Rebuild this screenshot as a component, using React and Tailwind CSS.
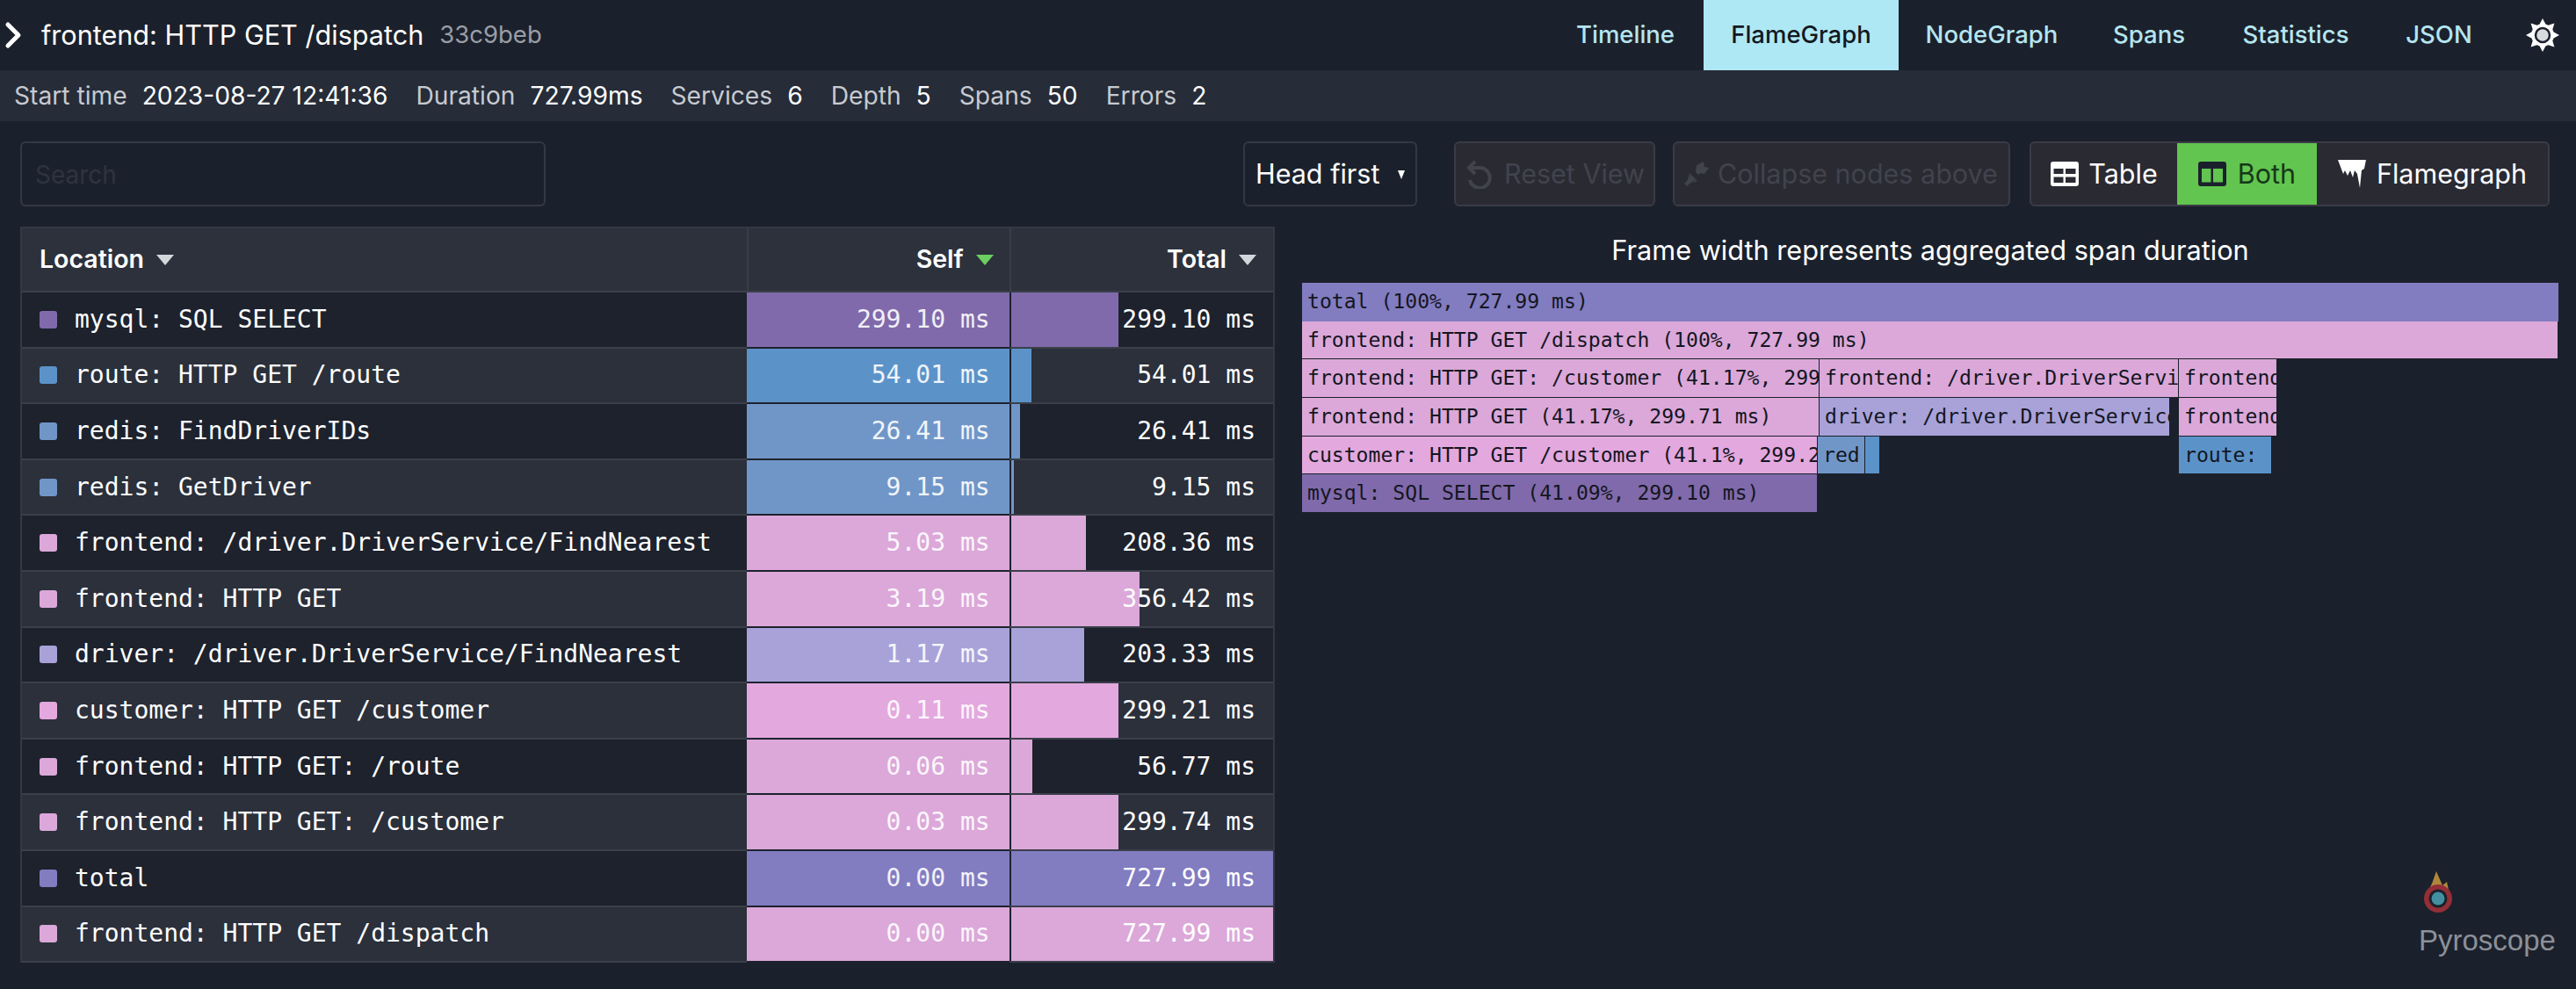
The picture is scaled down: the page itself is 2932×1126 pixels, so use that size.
import { ChevronRight } from "lucide-react";

const rows = [
  { name: "mysql: SQL SELECT", self: "299.10 ms", total: "299.10 ms", selfBar: "bg-[#806aab]", pct: 41.09 },
  { name: "route: HTTP GET /route", self: "54.01 ms", total: "54.01 ms", selfBar: "bg-[#5b93c9]", pct: 7.8 },
  { name: "redis: FindDriverIDs", self: "26.41 ms", total: "26.41 ms", selfBar: "bg-[#7096c8]", pct: 3.63 },
  { name: "redis: GetDriver", self: "9.15 ms", total: "9.15 ms", selfBar: "bg-[#7096c8]", pct: 1.26 },
  { name: "frontend: /driver.DriverService/FindNearest", self: "5.03 ms", total: "208.36 ms", selfBar: "bg-[#dba8d9]", pct: 28.6 },
  { name: "frontend: HTTP GET", self: "3.19 ms", total: "356.42 ms", selfBar: "bg-[#dba8d9]", pct: 48.96 },
  { name: "driver: /driver.DriverService/FindNearest", self: "1.17 ms", total: "203.33 ms", selfBar: "bg-[#a8a2d9]", pct: 27.93 },
  { name: "customer: HTTP GET /customer", self: "0.11 ms", total: "299.21 ms", selfBar: "bg-[#e3a8de]", pct: 41.1 },
  { name: "frontend: HTTP GET: /route", self: "0.06 ms", total: "56.77 ms", selfBar: "bg-[#dba8d9]", pct: 8.3 },
  { name: "frontend: HTTP GET: /customer", self: "0.03 ms", total: "299.74 ms", selfBar: "bg-[#dba8d9]", pct: 41.17 },
  { name: "total", self: "0.00 ms", total: "727.99 ms", selfBar: "bg-[#827cc1]", pct: 100 },
  { name: "frontend: HTTP GET /dispatch", self: "0.00 ms", total: "727.99 ms", selfBar: "bg-[#dba8d9]", pct: 100 },
];

const flameRows = [
  [{ w: 1430, c: "bg-[#827cc1]", t: "total (100%, 727.99 ms)" }],
  [{ w: 1430, c: "bg-[#dba8d9]", t: "frontend: HTTP GET /dispatch (100%, 727.99 ms)" }],
  [
    { w: 589, c: "bg-[#dba8d9]", t: "frontend: HTTP GET: /customer (41.17%, 299" },
    { w: 409, c: "bg-[#dba8d9]", t: "frontend: /driver.DriverServi" },
    { w: 112, c: "bg-[#dba8d9]", t: "frontend" },
  ],
  [
    { w: 589, c: "bg-[#dba8d9]", t: "frontend: HTTP GET (41.17%, 299.71 ms)" },
    { w: 399, c: "bg-[#a8a2d9]", t: "driver: /driver.DriverService" },
    { w: 10, c: "" },
    { w: 112, c: "bg-[#dba8d9]", t: "frontend" },
  ],
  [
    { w: 587, c: "bg-[#e3a8de]", t: "customer: HTTP GET /customer (41.1%, 299.2" },
    { w: 54, c: "bg-[#7096c8]", t: "red" },
    { w: 17, c: "bg-[#5b93c9]" },
    { w: 340, c: "" },
    { w: 106, c: "bg-[#5b93c9]", t: "route:" },
  ],
  [{ w: 587, c: "bg-[#806aab]", t: "mysql: SQL SELECT (41.09%, 299.10 ms)" }],
];

const Caret = ({ className }) => (
  <svg width="20" height="12" viewBox="0 0 20 12" className={className}>
    <path d="M0 0h20L10 12z" fill="currentColor" />
  </svg>
);

const TableIcon = () => (
  <svg width="32" height="28" viewBox="0 0 32 28">
    <path fillRule="evenodd" fill="#fff" d="M3 0h26a3 3 0 0 1 3 3v22a3 3 0 0 1-3 3H3a3 3 0 0 1-3-3V3a3 3 0 0 1 3-3zM3.5 8v6h11V8zM17 8v6h11.5V8zM3.5 17.5V24h11v-6.500zM17 17.500V24h11.500v-6.500z" />
  </svg>
);

const BothIcon = () => (
  <svg width="32" height="28" viewBox="0 0 32 28">
    <path fillRule="evenodd" fill="#1b212c" d="M3 0h26a3 3 0 0 1 3 3v22a3 3 0 0 1-3 3H3a3 3 0 0 1-3-3V3a3 3 0 0 1 3-3zM4 8v15.500h10.500V8zM17 8v15.500h11V8z" />
  </svg>
);

const FlameIcon = () => (
  <svg width="32" height="32" viewBox="0 0 32 32">
    <path fill="#fff" d="M0 0h32l-2 10-3 2-2 20-3-16-3-4-2 8-3-8-3 6-3-6-2 4-3-8z" />
  </svg>
);

const ResetIcon = () => (
  <svg width="32" height="33" viewBox="0 0 32 33" fill="none" stroke="#41434d" strokeWidth="4">
    <path d="M7 9h9a11.500 11.500 0 1 1-11 14" />
    <path d="M11 2 4 9l7 7" />
  </svg>
);

const CollapseIcon = () => (
  <svg width="28" height="28" viewBox="0 0 28 28" fill="#41434d">
    <path d="M14 4l8-4 1 6 5 1-5 7-5-1-2 2-3-3z" />
    <path d="M3 28l-3-3 9-9 3 3z" />
    <path d="M6 13l9 9-3 2-2-1-5 3-1-7z" opacity="0.8" />
  </svg>
);

// eight long points round a dark ring
const sunPoints = Array.from({ length: 24 }, (_, i) => {
  const a = (i * Math.PI) / 12 - Math.PI / 2;
  const r = i % 3 === 0 ? 19 : 13;
  return `${(19 + r * Math.cos(a)).toFixed(1)},${(19 + r * Math.sin(a)).toFixed(1)}`;
}).join(" ");

const SunIcon = () => (
  <svg width="38" height="38" viewBox="0 0 38 38">
    <polygon points={sunPoints} fill="#fff" />
    <circle cx="19" cy="19" r="8" fill="#d8dade" stroke="#1b212c" strokeWidth="2.500" />
  </svg>
);

const Stat = ({ label, value }) => (
  <span className="flex gap-[17px]">
    <span className="text-[#c7cad0]">{label}</span>
    <span className="text-white">{value}</span>
  </span>
);

const Tab = ({ children, active, className = "" }) => (
  <div
    className={`h-full flex items-center justify-center font-medium text-[27.5px] ${
      active ? "bg-[#aee8f4] text-[#14181f]" : "text-[#b5e5f0]"
    } ${className}`}
  >
    {children}
  </div>
);

const Row = ({ row, odd }) => (
  <div className={`flex h-[63.6px] border-b-2 border-[#3a3f4a] ${odd ? "bg-[#2b303b]" : "bg-[#1d222d]"}`}>
    <div className="w-[827px] flex items-center pl-[20px] gap-[20px] text-[28px] text-white">
      <span className={`w-[20px] h-[20px] rounded-[3px] ${row.selfBar}`} />
      {row.name}
    </div>
    <div className={`w-[299px] flex items-center justify-end pr-[22px] text-[28px] text-white/90 border-b-2 border-[#1d222d] -mb-[2px] ${row.selfBar}`}>
      {row.self}
    </div>
    <div className="relative w-[301px] flex items-center justify-end pr-[20px] text-[28px] text-white border-l-2 border-[#1d222d]">
      <div className={`absolute left-0 top-0 bottom-0 ${row.selfBar}`} style={{ width: `${row.pct}%` }} />
      <span className="relative">{row.total}</span>
    </div>
  </div>
);

export default function App() {
  return (
    <div className="w-[2932px] h-[1126px] bg-[#1b212c] overflow-hidden font-['Inter',sans-serif]">
      {/* Top bar */}
      <div className="h-[80px] flex items-center">
        <ChevronRight size={48} strokeWidth={2.5} className="text-white -ml-[9px] -mr-[2px]" />
        <span className="ml-[10px] text-[30.6px] text-white">frontend: HTTP GET /dispatch</span>
        <span className="ml-[18px] text-[27.5px] text-[#9a9ea6]">33c9beb</span>
        <div className="ml-auto h-full flex items-center">
          <Tab className="w-[112px] mr-[33px]">Timeline</Tab>
          <Tab active className="w-[222px]">FlameGraph</Tab>
          <Tab className="w-[152px] ml-[30px]">NodeGraph</Tab>
          <Tab className="w-[80px] ml-[63px]">Spans</Tab>
          <Tab className="w-[126px] ml-[64px]">Statistics</Tab>
          <Tab className="w-[74px] ml-[63px]">JSON</Tab>
          <div className="ml-[62px] mr-[19px]"><SunIcon /></div>
        </div>
      </div>

      {/* Stats */}
      <div className="h-[58px] bg-[#262c38] flex items-center pl-[16px] text-[28.2px] gap-[32px]">
        <Stat label="Start time" value="2023-08-27 12:41:36" />
        <Stat label="Duration" value="727.99ms" />
        <Stat label="Services" value="6" />
        <Stat label="Depth" value="5" />
        <Stat label="Spans" value="50" />
        <Stat label="Errors" value="2" />
      </div>

      {/* Controls */}
      <div className="h-[120px] flex items-center pl-[23px] pr-[30px]">
        <div className="w-[598px] h-[74px] rounded-[6px] border-2 border-[#333845] flex items-center pl-[15px] pt-[2px] text-[28px] text-[#2e3340]">
          Search
        </div>
        <div className="ml-auto w-[198px] h-[74px] rounded-[6px] border-2 border-[#333845] flex items-center justify-between px-[12px] text-[30.500px] text-white">
          Head first
          <svg width="8" height="12" viewBox="0 0 8 12"><path d="M0 2h8L4 12z" fill="#fff" /></svg>
        </div>
        <div className="ml-[42px] w-[229px] h-[74px] rounded-[6px] border-2 border-[#3a3b45] bg-[#2a2a33] flex items-center pl-[11px] gap-[12px] text-[30.500px] text-[#41434d] whitespace-nowrap">
          <ResetIcon />
          Reset View
        </div>
        <div className="ml-[20px] w-[384px] h-[74px] rounded-[6px] border-2 border-[#3a3b45] bg-[#2a2a33] flex items-center pl-[11px] gap-[10px] text-[30.500px] text-[#41434d] whitespace-nowrap">
          <CollapseIcon />
          Collapse nodes above
        </div>
        <div className="ml-[22px] w-[592px] h-[74px] rounded-[6px] border-2 border-[#3a3b45] bg-[#2a2a33] flex text-[30.500px] text-white overflow-hidden">
          <div className="w-[166px] flex items-center justify-center gap-[11px]"><TableIcon />Table</div>
          <div className="w-[159px] flex items-center justify-center gap-[13px] bg-[#62c54f] text-[#16381a]"><BothIcon />Both</div>
          <div className="flex-1 flex items-center justify-center gap-[12px]"><FlameIcon />Flamegraph</div>
        </div>
      </div>

      {/* Main */}
      <div className="flex pl-[23px]">
        <div className="w-[1428px] border-2 border-[#333844] border-b-0">
          <div className="flex h-[73px] bg-[#2c313c] border-b-2 border-[#3a3f4a] text-[28.5px] font-semibold text-white">
            <div className="w-[827px] flex items-center pl-[20px] gap-[14px]">
              Location <Caret className="text-[#d3d6db]" />
            </div>
            <div className="w-[299px] flex items-center justify-end pr-[18px] gap-[14px] border-l-2 border-[#383d48]">
              Self <Caret className="text-[#6ccf5f]" />
            </div>
            <div className="w-[301px] flex items-center justify-end pr-[19px] gap-[14px] border-l-2 border-[#383d48]">
              Total <Caret className="text-[#d3d6db]" />
            </div>
          </div>
          <div className="font-['DejaVu_Sans_Mono',monospace]">
            {rows.map((row, i) => (
              <Row key={row.name} row={row} odd={i % 2 === 1} />
            ))}
          </div>
        </div>

        <div className="ml-[31px] flex-1">
          <div className="h-[54px] mb-[10px] text-[30.700px] text-white w-[1430px] flex items-center justify-center">
            Frame width represents aggregated span duration
          </div>
          <div className="font-['DejaVu_Sans_Mono',monospace] text-[23.100px] text-[#14161f]">
            {flameRows.map((frames, i) => (
              <div key={i} className="flex h-[43.700px]">
                {frames.map((f, j) => (
                  <div
                    key={j}
                    style={{ width: f.w }}
                    className={`${f.c} ${f.c && i > 0 ? "border-b border-[#1b212c] border-r" : ""} overflow-hidden whitespace-nowrap pl-[6px] leading-[42px]`}
                  >
                    {f.t}
                  </div>
                ))}
              </div>
            ))}
          </div>
        </div>
      </div>

      {/* Watermark */}
      <div className="absolute left-[2753px] top-[990px] flex flex-col items-start">
        <svg width="38" height="50" viewBox="0 0 38 50" className="ml-[3px] mb-[14px] opacity-85">
          <path d="M17 2l7 16 5-4 3 14H6l6-12z" fill="#c9993f" />
          <circle cx="19" cy="33" r="16" fill="#a8323a" />
          <circle cx="19" cy="33" r="10.500" fill="#1b212c" />
          <circle cx="19" cy="33" r="7.500" fill="#4aa3b5" />
        </svg>
        <span className="text-[33px] leading-none text-[#8c9098] font-['Liberation_Sans',sans-serif]">Pyroscope</span>
      </div>
    </div>
  );
}
